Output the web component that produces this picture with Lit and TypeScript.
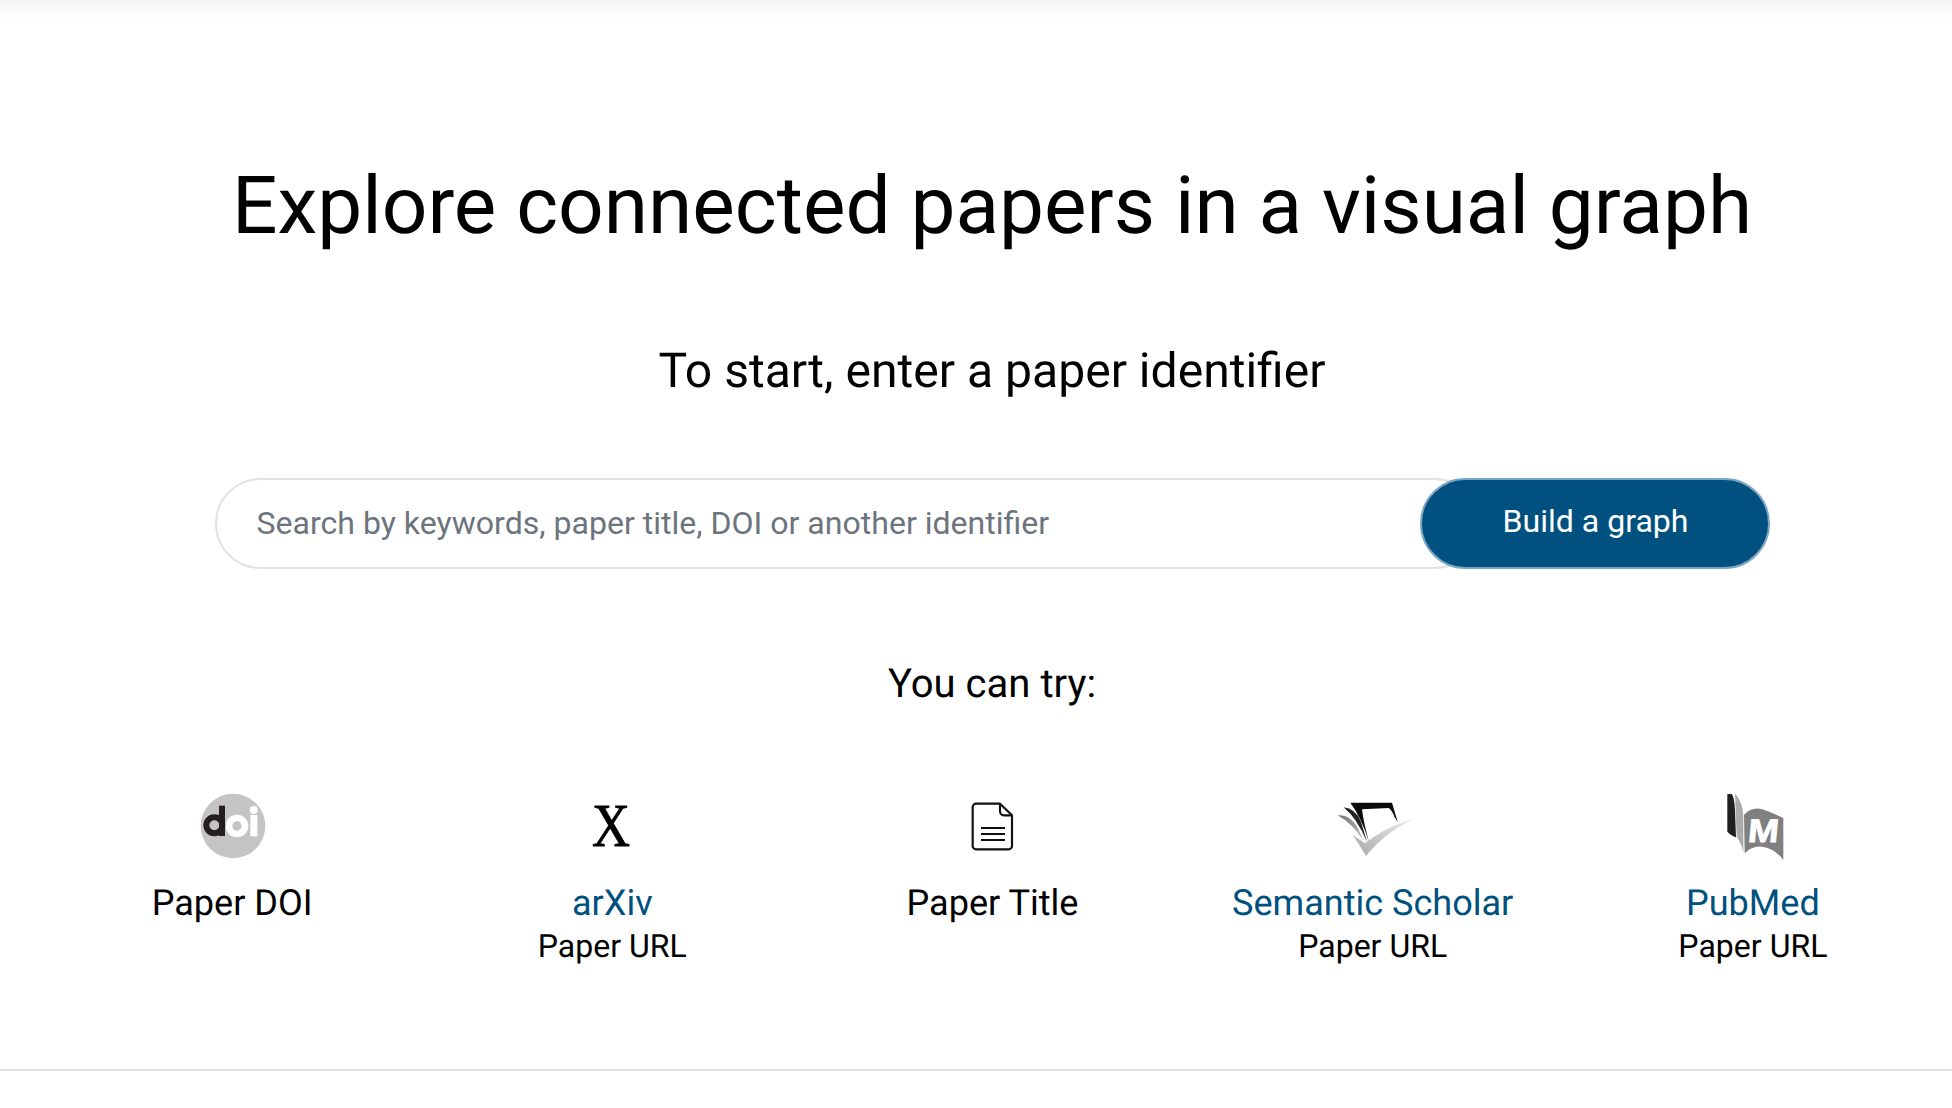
import { css, html, LitElement, svg } from "lit";
import { customElement } from "lit/decorators.js";

const doiIcon = svg`
  <circle cx="189" cy="168" r="97" fill="#c4c4c4" />
  <circle cx="133" cy="166" r="24" fill="none" stroke="#231f20" stroke-width="18" />
  <rect x="147" y="107" width="18" height="91" fill="#231f20" />
  <circle cx="201" cy="168" r="24" fill="none" stroke="#fff" stroke-width="20" />
  <rect x="241" y="135" width="21" height="64" fill="#fff" />
  <circle cx="251" cy="120" r="12" fill="#fff" />
`;

const arxivIcon = svg`
  <text x="154" y="199" text-anchor="middle" class="arxiv" textLength="114" lengthAdjust="spacingAndGlyphs">X</text>
`;

const fileIcon = svg`
  <g fill="none" stroke="#111" stroke-width="6.5" stroke-linejoin="round">
    <path d="M108 71H180L216 106V198a10 10 0 0 1-10 10H108a10 10 0 0 1-10-10V81a10 10 0 0 1 10-10Z" />
    <path d="M180 71V94a12 12 0 0 0 12 12H216" />
    <path d="M123 144H195M123 162H195M123 180H195" />
  </g>
`;

const semanticIcon = svg`
  <defs>
    <linearGradient id="check" x1="0" y1="1" x2="1" y2="0">
      <stop offset="0" stop-color="#a8a8a8" />
      <stop offset="1" stop-color="#eeeeee" />
    </linearGradient>
    <linearGradient id="leaf" x1="0" y1="0" x2="1" y2="1">
      <stop offset="0" stop-color="#777" />
      <stop offset="1" stop-color="#bbb" />
    </linearGradient>
  </defs>
  <path d="M90 68H215L232 126 222 110Q215 90 205 84L125 88Q130 130 146 186 122 110 90 68Z" fill="#0a0a0a" />
  <path d="M70 82Q105 85 122 125L140 186Q110 115 70 82Z" fill="#222" />
  <path d="M52 106Q88 102 110 140L130 182Q95 130 52 106Z" fill="url(#leaf)" />
  <path d="M97 165L135 190Q190 142 282 116 190 160 137 228 118 195 97 165Z" fill="url(#check)" />
`;

const pubmedIcon = svg`
  <path d="M82 42H95Q103 50 105 90L108 172Q90 165 82 155Z" fill="#1f1f1f" />
  <path d="M105 40Q130 70 130 110V220Q125 190 110 170Z" fill="#ababab" />
  <path d="M132 104Q155 80 185 87 215 96 250 115V240Q225 205 185 200 155 198 134 220Z" fill="#808080" />
  <text transform="translate(188 185) skewX(-5)" text-anchor="middle" class="pubmed" textLength="92" lengthAdjust="spacingAndGlyphs">M</text>
`;

const items = [
  { icon: doiIcon, view: "6 30 360 270", title: "Paper DOI", link: false, sub: "" },
  { icon: arxivIcon, view: "-23 0 360 270", title: "arXiv", link: true, sub: "Paper URL" },
  { icon: fileIcon, view: "-24 0 360 270", title: "Paper Title", link: false, sub: "" },
  { icon: semanticIcon, view: "-22 0 360 270", title: "Semantic Scholar", link: true, sub: "Paper URL" },
  { icon: pubmedIcon, view: "-21 0 360 270", title: "PubMed", link: true, sub: "Paper URL" },
];

@customElement("app-root")
export default class AppRoot extends LitElement {
  static styles = css`
    :host {
      display: block;
      font-family: Roboto, "Liberation Sans", sans-serif;
      color: #000;
      text-rendering: geometricPrecision;
    }

    .page {
      height: 1108px;
      box-sizing: border-box;
      overflow: hidden;
      background: linear-gradient(#f5f5f5, #fff 20px);
    }

    .content {
      height: 1071px;
      box-sizing: border-box;
      padding: 156px 9px 0 41px;
      border-bottom: 2px solid #e2e2e2;
      display: flex;
      flex-direction: column;
      align-items: center;
    }

    h1 {
      margin: 0;
      font-size: 80.14px;
      line-height: 100px;
      font-weight: 400;
    }

    h2 {
      margin: 85px 0 0;
      font-size: 48.08px;
      line-height: 60px;
      font-weight: 400;
    }

    .search {
      margin-top: 77px;
      display: flex;
      width: 1555px;
      height: 91px;
    }

    .search input {
      flex: 1;
      min-width: 0;
      box-sizing: border-box;
      height: 100%;
      padding: 0 100px 2px 40px;
      border: 2px solid #e2e2e2;
      border-radius: 46px;
      outline: none;
      font-family: inherit;
      font-size: 32.05px;
      color: #212529;
      background: #fff;
    }

    .search input::placeholder {
      color: #6c757d;
      opacity: 1;
    }

    .search button {
      width: 350px;
      height: 100%;
      margin-left: -60px;
      padding: 0 0 5px 2px;
      position: relative;
      border: 2px solid #7aa6c2;
      border-radius: 46px;
      background: #005180;
      color: #fff;
      font-family: inherit;
      font-size: 32.05px;
    }

    h3 {
      margin: 90px 0 0;
      font-size: 40.07px;
      line-height: 50px;
      font-weight: 400;
    }

    .options {
      margin-top: 71px;
      margin-left: 1px;
      align-self: stretch;
      display: grid;
      grid-template-columns: repeat(5, 1fr);
    }

    .option {
      display: flex;
      flex-direction: column;
      align-items: center;
    }

    .option svg {
      width: 120px;
      height: 90px;
      display: block;
    }

    .arxiv {
      font-family: "Liberation Serif", serif;
      font-size: 184px;
      fill: #000;
      stroke: #000;
      stroke-width: 2.5px;
    }

    .pubmed {
      font-family: "Liberation Sans", sans-serif;
      font-weight: 700;
      font-size: 98px;
      fill: #fff;
      stroke: #fff;
      stroke-width: 2.5px;
    }

    .title {
      margin-top: 11px;
      font-size: 36.06px;
      line-height: 44px;
    }

    .title.link {
      color: #005180;
    }

    .sub {
      font-size: 32.05px;
      line-height: 42px;
    }
  `;

  render() {
    return html`
      <div class="page">
        <div class="content">
          <h1>Explore connected papers in a visual graph</h1>
          <h2>To start, enter a paper identifier</h2>
          <div class="search">
            <input type="text" placeholder="Search by keywords, paper title, DOI or another identifier" />
            <button type="button">Build a graph</button>
          </div>
          <h3>You can try:</h3>
          <div class="options">
            ${items.map(
              (item) => html`
                <div class="option">
                  <svg viewBox=${item.view}>${item.icon}</svg>
                  <div class="title ${item.link ? "link" : ""}">${item.title}</div>
                  ${item.sub ? html`<div class="sub">${item.sub}</div>` : ""}
                </div>
              `,
            )}
          </div>
        </div>
      </div>
    `;
  }
}
